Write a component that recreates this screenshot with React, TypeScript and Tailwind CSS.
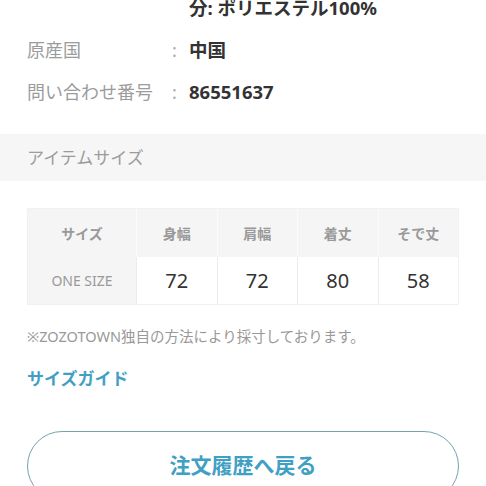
import React from 'react';

const font = { fontFamily: '"Noto Sans", "Noto Sans CJK JP", sans-serif' };

const specs = [
  { label: '', value: '分: ポリエステル100%' },
  { label: '原産国', value: '中国' },
  { label: '問い合わせ番号', value: '86551637' },
];

const columns = ['身幅', '肩幅', '着丈', 'そで丈'];
const values = ['72', '72', '80', '58'];

export default function App() {
  return (
    <div className="h-[486px] w-[486px] overflow-hidden bg-white" style={font}>
      {/* Spec rows */}
      <div className="-mt-[13px] px-[27px]">
        {specs.map((row, i) => (
          <div key={i} className="flex h-[42px] items-center text-[18px]">
            <div className="w-[145px] text-[#9c9c9c]">{row.label}</div>
            <div className="w-[17px] text-[#aaa]">{row.label ? ':' : ''}</div>
            <div className="text-[18.5px] font-bold text-[#333]">{row.value}</div>
          </div>
        ))}
      </div>

      {/* Section header */}
      <div className="mt-[21px] flex h-[47px] items-center bg-[#f6f6f6] px-[27px] text-[17px] text-[#9c9c9c]">
        アイテムサイズ
      </div>

      {/* Size table */}
      <div className="px-[27px] pt-[27px]">
        <div className="grid grid-cols-[108px_repeat(4,1fr)] border border-[#f1f1f1] text-center">
          <div className="flex h-[48px] items-center justify-center bg-[#f5f5f5] text-[14px] font-bold text-[#999]">
            サイズ
          </div>
          {columns.map((c) => (
            <div
              key={c}
              className="flex h-[48px] items-center justify-center border-l border-[#fbfbfb] bg-[#f5f5f5] text-[14px] font-bold text-[#999]"
            >
              {c}
            </div>
          ))}
          <div className="flex h-[47px] items-center justify-center bg-[#f5f5f5] text-[14px] text-[#999]">
            ONE SIZE
          </div>
          {values.map((v, i) => (
            <div
              key={i}
              className="flex h-[47px] items-center justify-center border-l border-[#ececec] text-[20px] text-[#333]"
            >
              {v}
            </div>
          ))}
        </div>
      </div>

      {/* Note */}
      <div className="px-[27px]">
        <p className="mt-[21px] text-[14.5px] leading-[20px] text-[#999]">
          ※ZOZOTOWN独自の方法により採寸しております。
        </p>
        <p className="mt-[21px] text-[17px] font-bold leading-[24px] text-[#3fa0c3]">サイズガイド</p>

        {/* Back button */}
        <button className="mt-[40px] flex h-[70px] w-full items-center justify-center rounded-full border border-[#74a4a8] pb-[1px] text-[21px] font-bold text-[#3fa0c3]">
          注文履歴へ戻る
        </button>
      </div>
    </div>
  );
}
